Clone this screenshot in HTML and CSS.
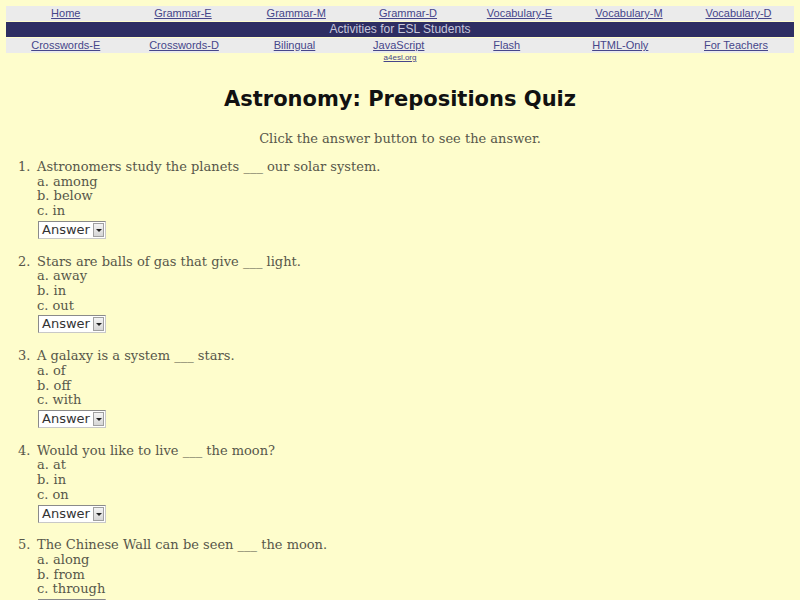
FILE: index.html
```html
<!DOCTYPE html>
<html>
<head>
<meta charset="utf-8">
<title>Astronomy: Prepositions Quiz</title>
<link rel="stylesheet" href="styles.css">
</head>
<body>
<nav class="menu">
  <div class="row links top">
    <a href="#">Home</a><a href="#">Grammar-E</a><a href="#">Grammar-M</a><a href="#">Grammar-D</a><a href="#">Vocabulary-E</a><a href="#">Vocabulary-M</a><a href="#">Vocabulary-D</a>
  </div>
  <div class="row banner">Activities for ESL Students</div>
  <div class="row links bottom">
    <a href="#">Crosswords-E</a><a href="#">Crosswords-D</a><a href="#">Bilingual</a><a href="#">JavaScript</a><a href="#">Flash</a><a href="#">HTML-Only</a><a href="#">For Teachers</a>
  </div>
  <div class="site"><a href="#">a4esl.org</a></div>
</nav>
<h1 class="title">Astronomy: Prepositions Quiz</h1>
<p class="intro">Click the answer button to see the answer.</p>
<ol class="quiz">
  <li><div>Astronomers study the planets ___ our solar system.<br>a. among<br>b. below<br>c. in<br><span class="answer"><span class="label">Answer</span><span class="arrow"></span></span></div></li>
  <li><div>Stars are balls of gas that give ___ light.<br>a. away<br>b. in<br>c. out<br><span class="answer"><span class="label">Answer</span><span class="arrow"></span></span></div></li>
  <li><div>A galaxy is a system ___ stars.<br>a. of<br>b. off<br>c. with<br><span class="answer"><span class="label">Answer</span><span class="arrow"></span></span></div></li>
  <li><div>Would you like to live ___ the moon?<br>a. at<br>b. in<br>c. on<br><span class="answer"><span class="label">Answer</span><span class="arrow"></span></span></div></li>
  <li><div>The Chinese Wall can be seen ___ the moon.<br>a. along<br>b. from<br>c. through<br><span class="answer"><span class="label">Answer</span><span class="arrow"></span></span></div></li>
</ol>
</body>
</html>
```
FILE: styles.css
```css
html, body {
  margin: 0;
  background: #fefdcc;
}
body {
  padding: 6px 6px 0 6px;
  font-family: "DejaVu Serif", serif;
  color: #57574a;
}
.menu {
  display: flex;
  flex-direction: column;
  gap: 1px;
  font-family: "Liberation Sans", Arial, sans-serif;
}
.row {
  height: 15px;
  line-height: 15px;
}
.links {
  display: grid;
  background: #ebebeb;
  font-size: 11px;
  text-align: center;
}
.links.top {
  grid-template-columns: 119.5fr 115fr 111.5fr 112fr 111fr 108fr 111fr;
}
.links.bottom {
  grid-template-columns: 119.5fr 117fr 104fr 104.5fr 111.5fr 115.5fr 116fr;
}
.links a, .site a {
  color: #46468a;
  text-decoration: underline;
}
.banner {
  background: #2e2e62;
  color: #c8c8dc;
  font-size: 12px;
  text-align: center;
}
.site {
  text-align: center;
  font-size: 8px;
  line-height: 8px;
  margin-top: 0;
}
.title {
  margin: 23px 0 0 0;
  text-align: center;
  font-family: "Comic Sans MS", "DejaVu Sans", sans-serif;
  font-size: 21px;
  line-height: 28px;
  font-weight: bold;
  color: #111;
}
.intro {
  margin: 18px 0 0 0;
  text-align: center;
  font-size: 13px;
  line-height: 16px;
}
.quiz {
  list-style: none;
  counter-reset: q;
  margin: 13px 0 0 0;
  padding-left: 12px;
  font-size: 13px;
  line-height: 14.7px;
}
.quiz li {
  counter-increment: q;
  display: grid;
  grid-template-columns: 19px auto;
  margin-bottom: 15.75px;
}
.quiz li::before {
  content: counter(q) ".";
}
.answer {
  display: inline-flex;
  align-items: center;
  margin-top: 2px;
  margin-left: 1px;
  height: 16px;
  border: 1px solid #8a8a8a;
  border-right-color: #c8c8c8;
  border-bottom-color: #c8c8c8;
  background: #fff;
  font-family: "DejaVu Sans", sans-serif;
  font-size: 13px;
  color: #333;
  vertical-align: top;
}
.label {
  padding: 0 3px 0 3px;
  line-height: 16px;
}
.arrow {
  position: relative;
  width: 11px;
  height: 14px;
  margin-right: 1px;
  background: linear-gradient(#f4f4f4, #d6d6d6);
  border: 1px solid #a0a0a0;
  box-sizing: border-box;
}
.arrow::after {
  content: "";
  position: absolute;
  left: 2px;
  top: 5px;
  border-left: 3px solid transparent;
  border-right: 3px solid transparent;
  border-top: 3px solid #222;
}
```
